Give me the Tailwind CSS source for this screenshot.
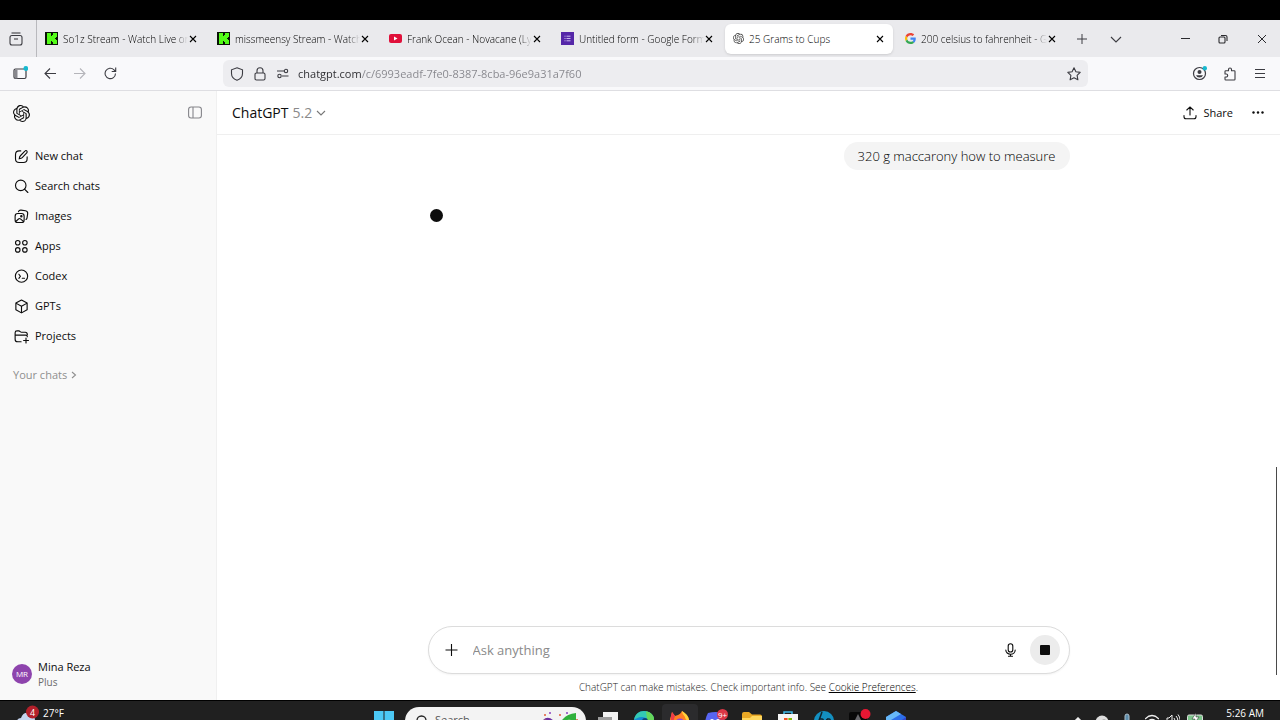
<!DOCTYPE html>
<html lang="en">

<head>
    <meta charset="utf-8" />
    <meta name="viewport" content="width=device-width, initial-scale=1.0" />
    <title>25 Grams to Cups</title>
    <script src="https://cdn.jsdelivr.net/npm/@tailwindcss/browser@4"></script>
</head>

<body class="flex h-screen flex-col overflow-hidden bg-black font-['Open_Sans','Noto_Sans',sans-serif] text-[11px] text-[#0d0d0d]">
    <!-- shared logo -->
    <svg class="hidden">
        <symbol id="knot" viewBox="0 0 24 24">
            <path fill="currentColor" d="M22.2819 9.8211a5.9847 5.9847 0 0 0-.5157-4.9108 6.0462 6.0462 0 0 0-6.5098-2.9A6.0651 6.0651 0 0 0 4.9807 4.1818a5.9847 5.9847 0 0 0-3.9977 2.9 6.0462 6.0462 0 0 0 .7427 7.0966 5.98 5.98 0 0 0 .511 4.9107 6.051 6.051 0 0 0 6.5146 2.9001A5.9847 5.9847 0 0 0 13.2599 24a6.0557 6.0557 0 0 0 5.7718-4.2058 5.9894 5.9894 0 0 0 3.9977-2.9001 6.0557 6.0557 0 0 0-.7475-7.0729zm-9.022 12.6081a4.4755 4.4755 0 0 1-2.8764-1.0408l.1419-.0804 4.7783-2.7582a.7948.7948 0 0 0 .3927-.6813v-6.7369l2.02 1.1686a.071.071 0 0 1 .038.052v5.5826a4.504 4.504 0 0 1-4.4945 4.4944zm-9.6607-4.1254a4.4708 4.4708 0 0 1-.5346-3.0137l.142.0852 4.783 2.7582a.7712.7712 0 0 0 .7806 0l5.8428-3.3685v2.3324a.0804.0804 0 0 1-.0332.0615L9.74 19.9502a4.4992 4.4992 0 0 1-6.1408-1.6464zM2.3408 7.8956a4.485 4.485 0 0 1 2.3655-1.9728V11.6a.7664.7664 0 0 0 .3879.6765l5.8144 3.3543-2.0201 1.1685a.0757.0757 0 0 1-.071 0l-4.8303-2.7865A4.504 4.504 0 0 1 2.3408 7.872zm16.5963 3.8558L13.1038 8.364 15.1192 7.2a.0757.0757 0 0 1 .071 0l4.8303 2.7913a4.4944 4.4944 0 0 1-.6765 8.1042v-5.6772a.79.79 0 0 0-.407-.667zm2.0107-3.0231l-.142-.0852-4.7735-2.7818a.7759.7759 0 0 0-.7854 0L9.409 9.2297V6.8974a.0662.0662 0 0 1 .0284-.0615l4.8303-2.7866a4.4992 4.4992 0 0 1 6.6802 4.66zM8.3065 12.863l-2.02-1.1638a.0804.0804 0 0 1-.038-.0567V6.0742a4.4992 4.4992 0 0 1 7.3757-3.4537l-.142.0805L8.704 5.459a.7948.7948 0 0 0-.3927.6813zm1.0976-2.3654l2.602-1.4998 2.6069 1.4998v2.9994l-2.5974 1.4997-2.6067-1.4997Z" />
        </symbol>
        <symbol id="close" viewBox="0 0 8 8">
            <path fill="none" stroke="currentColor" stroke-width="1.1" d="M1 1l6 6M7 1L1 7" />
        </symbol>
        <symbol id="kick" viewBox="0 0 13 13">
            <path fill="#0a1406" d="M0 0h13v13H0z" />
            <path fill="#53fc18" d="M2 1h4v3h1V3h1V1h4v4h-1v1h-1v1h1v1h1v4H8v-2H7V9H6v3H2z" />
        </symbol>
    </svg>

    <!-- tab strip -->
    <header class="mt-5 flex h-[37px] shrink-0 items-center bg-[#eaeaed]">
        <button aria-label="Recent browsing" class="flex h-full w-[37px] shrink-0 items-center justify-center border-r border-[#b9b9bd] pr-1">
            <svg class="size-[14px]" viewBox="0 0 14 14" fill="none" stroke="#3c3c42" stroke-width="1.1"><path d="M2.5 1h9" /><rect x="1" y="3.5" width="12" height="9.5" rx="2" /><path d="M5 7h4" /></svg>
        </button>
        <nav class="flex min-w-0 items-center gap-1 text-[10px] leading-4 font-light text-black" aria-label="Tabs">
            <div class="flex h-[30px] w-[168px] items-center gap-[5px] rounded-md pr-2 pl-2">
                <svg class="size-[13px] shrink-0"><use href="#kick" /></svg>
                <span class="min-w-0 flex-1 overflow-hidden pt-px whitespace-nowrap [mask-image:linear-gradient(to_right,black_90%,transparent)]">So1z Stream - Watch Live or</span>
                <button aria-label="Close tab" class="-ml-1 shrink-0"><svg class="size-2"><use href="#close" /></svg></button>
            </div>
            <div class="flex h-[30px] w-[168px] items-center gap-[5px] rounded-md pr-2 pl-2">
                <svg class="size-[13px] shrink-0"><use href="#kick" /></svg>
                <span class="min-w-0 flex-1 overflow-hidden pt-px whitespace-nowrap [mask-image:linear-gradient(to_right,black_90%,transparent)]">missmeensy Stream - Watch</span>
                <button aria-label="Close tab" class="-ml-1 shrink-0"><svg class="size-2"><use href="#close" /></svg></button>
            </div>
            <div class="flex h-[30px] w-[168px] items-center gap-[5px] rounded-md pr-2 pl-2">
                <svg class="size-[13px] shrink-0" viewBox="0 0 13 13"><rect y="2" width="13" height="9" rx="2" fill="#e0103a" /><path d="M5 4.5v4l3.5-2z" fill="#fff" /></svg>
                <span class="min-w-0 flex-1 overflow-hidden pt-px whitespace-nowrap [mask-image:linear-gradient(to_right,black_90%,transparent)]">Frank Ocean - Novacane (Ly</span>
                <button aria-label="Close tab" class="-ml-1 shrink-0"><svg class="size-2"><use href="#close" /></svg></button>
            </div>
            <div class="flex h-[30px] w-[168px] items-center gap-[5px] rounded-md pr-2 pl-2">
                <svg class="size-[13px] shrink-0" viewBox="0 0 13 13"><path d="M0 0h13v13H0z" fill="#5527a8" /><path d="M3.5 4.2h1m1 0h4m-6 2.3h1m1 0h4m-6 2.3h1m1 0h4" stroke="#d9c9f5" stroke-width=".9" /></svg>
                <span class="min-w-0 flex-1 overflow-hidden pt-px whitespace-nowrap [mask-image:linear-gradient(to_right,black_90%,transparent)]">Untitled form - Google Form</span>
                <button aria-label="Close tab" class="-ml-1 shrink-0"><svg class="size-2"><use href="#close" /></svg></button>
            </div>
            <div class="flex h-[30px] w-[168px] items-center gap-[5px] rounded-md bg-white pr-[9px] pl-2 shadow-sm">
                <svg class="size-[11px] shrink-0 text-[#444]"><use href="#knot" /></svg>
                <span class="min-w-0 flex-1 overflow-hidden pt-px whitespace-nowrap">25 Grams to Cups</span>
                <button aria-label="Close tab" class="-ml-1 shrink-0"><svg class="size-2"><use href="#close" /></svg></button>
            </div>
            <div class="flex h-[30px] w-[168px] items-center gap-[5px] rounded-md pr-[9px] pl-2">
                <svg class="size-[11px] shrink-0" viewBox="0 0 48 48"><path fill="#EA4335" d="M24 9.5c3.54 0 6.71 1.22 9.21 3.6l6.85-6.85C35.9 2.38 30.47 0 24 0 14.62 0 6.51 5.38 2.56 13.22l7.98 6.19C12.43 13.72 17.74 9.5 24 9.5z" /><path fill="#4285F4" d="M46.98 24.55c0-1.57-.15-3.09-.38-4.55H24v9.02h12.94c-.58 2.96-2.26 5.48-4.78 7.18l7.73 6c4.51-4.18 7.09-10.36 7.09-17.65z" /><path fill="#FBBC05" d="M10.53 28.59c-.48-1.45-.76-2.99-.76-4.59s.27-3.14.76-4.59l-7.98-6.19C.92 16.46 0 20.12 0 24c0 3.88.92 7.54 2.56 10.78l7.97-6.19z" /><path fill="#34A853" d="M24 48c6.48 0 11.93-2.13 15.89-5.81l-7.73-6c-2.15 1.45-4.92 2.3-8.16 2.3-6.26 0-11.57-4.22-13.47-9.91l-7.98 6.19C6.51 42.62 14.62 48 24 48z" /></svg>
                <span class="min-w-0 flex-1 overflow-hidden pt-px whitespace-nowrap [mask-image:linear-gradient(to_right,black_90%,transparent)]">200 celsius to fahrenheit - G</span>
                <button aria-label="Close tab" class="-ml-1 shrink-0"><svg class="size-2"><use href="#close" /></svg></button>
            </div>
        </nav>
        <div class="ml-[11px] flex gap-[22px] text-[#3c3c42]">
            <button aria-label="New tab"><svg class="size-3" viewBox="0 0 12 12" stroke="currentColor"><path d="M6 1v10M1 6h10" /></svg></button>
            <button aria-label="List all tabs"><svg class="size-3" viewBox="0 0 12 12" fill="none" stroke="currentColor" stroke-width="1.1"><path d="M1 4l5 5 5-5" /></svg></button>
        </div>
        <div class="mr-[13px] ml-auto flex gap-[26px] text-[#2a2a2e]">
            <button aria-label="Minimize"><svg class="size-3" viewBox="0 0 12 12" stroke="currentColor"><path d="M2 5.5h9" /></svg></button>
            <button aria-label="Restore"><svg class="size-3" viewBox="0 0 12 12" fill="none" stroke="currentColor" stroke-width="1.1"><rect x="2" y="4" width="6" height="6" rx="1" /><path d="M4 2.5h4.500q1.500 0 1.500 1.500v4" /></svg></button>
            <button aria-label="Close window"><svg class="size-3" viewBox="0 0 12 12" stroke="currentColor"><path d="M3 2l8 8M11 2l-8 8" /></svg></button>
        </div>
    </header>

    <!-- toolbar -->
    <div class="flex h-[34px] shrink-0 items-center border-b border-[#dedee2] bg-[#f9f9fb] text-[#3c3c42]">
        <div class="flex w-[216px] shrink-0 gap-4 pl-[13px]">
            <button aria-label="Sidebar"><svg class="size-[15px]" viewBox="0 0 15 15" fill="none" stroke="currentColor" stroke-width="1.2"><rect x="1" y="3" width="12" height="9.500" rx="1.500" /><path d="M2 3.500h2.500v9H2z" fill="#88888e" stroke="none" /><circle cx="12.800" cy="2.500" r="2.400" fill="#18b9cf" stroke="none" /></svg></button>
            <button aria-label="Back"><svg class="size-[14px]" viewBox="0 0 14 14" fill="none" stroke="currentColor" stroke-width="1.1"><path d="M12 6.500H1M6 1.500l-5 5 5 5" /></svg></button>
            <button aria-label="Forward" class="text-[#b5b5ba]"><svg class="size-[14px]" viewBox="0 0 14 14" fill="none" stroke="currentColor" stroke-width="1.1"><path d="M0 6.500h11M6 1.500l5 5-5 5" /></svg></button>
            <button aria-label="Reload"><svg class="size-[14px]" viewBox="0 0 14 14" fill="none" stroke="currentColor" stroke-width="1.1"><path d="M11.500 6.500A5.200 5.200 0 1 1 10 2.800L11.700 4.500M11.700 .5v4h-4" /></svg></button>
        </div>
        <div class="ml-[7px] flex h-[27px] max-w-[865px] flex-1 items-center gap-[9px] rounded-md bg-[#ededf0] px-[7px]">
            <svg class="size-[14px] shrink-0" viewBox="0 0 14 14" fill="none" stroke="currentColor" stroke-width="1.1"><path d="M7 .8l5.500 2v3.700c0 3-2 5.500-5.500 6.800C3.500 12 1.500 9.500 1.500 6.500V2.800z" /></svg>
            <svg class="size-[14px] shrink-0" viewBox="0 0 14 14" fill="none" stroke="currentColor" stroke-width="1.100"><rect x="2" y="6" width="10" height="7" rx="1.500" /><path d="M4 6V3.800a3 3 0 0 1 6 0V6" /></svg>
            <svg class="size-[13px] shrink-0" viewBox="0 0 13 13" fill="none" stroke="currentColor" stroke-width="1.100"><path d="M1 4h7M6 9h6.500" /><circle cx="10" cy="4" r="1.700" /><circle cx="3.500" cy="9" r="1.700" /></svg>
            <input aria-label="Address" type="text" value="chatgpt.com/c/6993eadf-7fe0-8387-8cba-96e9a31a7f60" class="min-w-0 flex-1 bg-[linear-gradient(to_right,#2a2a2e_63px,#85858b_63px)] bg-clip-text pt-[2px] text-[11px] text-transparent outline-none" />
            <button aria-label="Bookmark"><svg class="size-[14px]" viewBox="0 0 14 14" fill="none" stroke="currentColor" stroke-width="1.100" stroke-linejoin="round"><path d="M7 .8l1.900 4 4.300.6-3.100 3 .8 4.400L7 10.700l-3.900 2.100.8-4.400-3.100-3 4.300-.6z" /></svg></button>
        </div>
        <div class="mr-[13px] ml-auto flex gap-4">
            <button aria-label="Account"><svg class="size-[15px]" viewBox="0 0 15 15" fill="none" stroke="currentColor" stroke-width="1.200"><circle cx="7.500" cy="7.500" r="6" /><circle cx="7.500" cy="6" r="2" fill="currentColor" stroke="none" /><path d="M4 9.200h7q-.8 2.300-3.500 2.300T4 9.200z" fill="currentColor" stroke="none" /><circle cx="12.800" cy="2.300" r="2.200" fill="#18b9cf" stroke="none" /></svg></button>
            <button aria-label="Extensions"><svg class="size-[14px]" viewBox="0 0 14 14" fill="none" stroke="currentColor" stroke-width="1.100" stroke-linejoin="round"><path d="M2 6V4.500q0-.8.800-.8h2.700V2.500a1.500 1.500 0 0 1 3 0v1.200h2.700q.8 0 .8.800v7.700q0 .8-.8.800H2.800q-.8 0-.8-.8V10h1.200a1.500 1.500 0 0 0 0-3H2z" /></svg></button>
            <button aria-label="Menu"><svg class="size-[14px]" viewBox="0 0 14 14" stroke="currentColor"><path d="M2 2.500h10M2 6.500h10M2 10.500h10" /></svg></button>
        </div>
    </div>

    <div class="relative flex min-h-0 flex-1 bg-white">
        <!-- chat sidebar -->
        <aside class="flex w-[217px] shrink-0 flex-col border-r border-[#f0f0f0] bg-[#f9f9f9]">
            <div class="flex h-11 shrink-0 items-center justify-between pr-[14px] pl-[13px]">
                <a href="#" aria-label="Home"><svg class="size-[17px]"><use href="#knot" /></svg></a>
                <button aria-label="Close sidebar" class="text-[#85858a]"><svg class="size-[14px]" viewBox="0 0 14 14" fill="none" stroke="currentColor" stroke-width="1.100"><rect x=".6" y="1" width="12.800" height="11" rx="2.500" /><path d="M5 1v11" /></svg></button>
            </div>
            <nav class="mt-[6px] flex flex-col px-[14px]">
                <a href="#" class="flex h-[30px] items-center gap-[6px]">
                    <svg class="size-[15px]" viewBox="0 0 20 20" fill="none" stroke="currentColor" stroke-width="1.500" stroke-linecap="round"><path d="M9 2.500H7C4 2.500 2 4.500 2 7.500v5.500c0 3 2 5 5 5h5.500c3 0 5-2 5-5v-2.500" /><path d="M16.800 2.300a1.900 1.900 0 0 1 .2 2.900L11 11.500c-1 1-2.400 1.300-4 1.500.2-1.700.5-3 1.500-4l6-6.300c.600-.700 1.600-.800 2.300-.4z" /></svg>
                    <span class="pt-px">New chat</span></a>
                <a href="#" class="flex h-[30px] items-center gap-[6px]">
                    <svg class="size-[15px]" viewBox="0 0 20 20" fill="none" stroke="currentColor" stroke-width="1.500" stroke-linecap="round"><circle cx="9" cy="8.500" r="7" /><path d="M14 13.500l4.500 4.500" /></svg>
                    <span class="pt-px">Search chats</span></a>
                <a href="#" class="flex h-[30px] items-center gap-[6px]">
                    <svg class="size-[15px]" viewBox="0 0 20 20" fill="none" stroke="currentColor" stroke-width="1.500" stroke-linecap="round"><rect x="1.500" y="6" width="12" height="12" rx="3.500" /><path d="M6 3.500C6.500 2 8 1.300 9.500 1.500l5.800.9c2 .3 3.200 2 2.900 4l-.8 5.400c-.200 1-.600 1.700-1.400 2.200M2.500 16.500l3.500-3.200c1-.9 2-.8 3 .1l3.500 3.100" /><circle cx="9.800" cy="9.800" r=".9" /></svg>
                    <span class="pt-px">Images</span></a>
                <a href="#" class="flex h-[30px] items-center gap-[6px]">
                    <svg class="size-[15px]" viewBox="0 0 20 20" fill="none" stroke="currentColor" stroke-width="1.500"><circle cx="5" cy="5" r="3" /><circle cx="14.500" cy="5" r="3" /><circle cx="5" cy="14.500" r="3" /><circle cx="14.500" cy="14.500" r="3" /></svg>
                    <span class="pt-px">Apps</span></a>
                <a href="#" class="flex h-[30px] items-center gap-[6px]">
                    <svg class="size-[15px]" viewBox="0 0 20 20" fill="none" stroke="currentColor" stroke-width="1.500" stroke-linecap="round"><circle cx="10" cy="9.500" r="8.200" /><path d="M6.500 7l2 2.700-2 2.700M11 12.300h3" /></svg>
                    <span class="pt-px">Codex</span></a>
                <a href="#" class="flex h-[30px] items-center gap-[6px]">
                    <svg class="size-[15px]" viewBox="0 0 20 20" fill="none" stroke="currentColor" stroke-width="1.500" stroke-linejoin="round"><path d="M10 1.300l7.500 4v8.900L10 18.500l-7.500-4.300V5.300zM2.500 5.500L10 9.800l7.500-4.300M10 9.800v8.500" /></svg>
                    <span class="pt-px">GPTs</span></a>
                <a href="#" class="flex h-[30px] items-center gap-[6px]">
                    <svg class="size-[15px]" viewBox="0 0 20 20" fill="none" stroke="currentColor" stroke-width="1.500" stroke-linecap="round"><path d="M9.500 17H5c-2 0-3.500-1-3.500-3.500V5c0-1.500 1-2.500 2.500-2.500h2.500c1.500 0 2 1.800 3.500 1.800h5c2 0 2.800 1.200 2.800 3.200M1.500 8.200h13.800c1.500 0 2.500.5 2.500 2M16 12v6.500M12.800 15.300h6.500" /></svg>
                    <span class="pt-px">Projects</span></a>
            </nav>
            <button class="mt-[15px] flex items-center gap-[3px] px-[13px] leading-4 text-[#8f8f8f]"><span class="pt-px">Your chats</span>
                <svg class="size-2" viewBox="0 0 8 8" fill="none" stroke="currentColor" stroke-width="1.100"><path d="M2 1l3.500 3L2 7" /></svg></button>
            <button class="mt-auto mb-[11px] flex items-center gap-[6px] px-3 text-left">
                <span class="flex size-5 items-center justify-center rounded-full bg-[#8e44ad] text-[8px] text-white">MR</span>
                <span class="flex flex-col"><span class="leading-4">Mina Reza</span><span class="text-[10px] leading-[14px] text-[#6b6b6b]">Plus</span></span>
            </button>
        </aside>

        <!-- conversation -->
        <main class="flex min-w-0 flex-1 flex-col">
            <div class="flex h-11 shrink-0 items-center border-b border-[#efefef] px-[15px]">
                <button class="flex items-center gap-1 text-sm">ChatGPT <span class="text-[#8a8a8a]">5.2</span>
                    <svg class="size-[10px] text-[#777]" viewBox="0 0 10 10" fill="none" stroke="currentColor" stroke-width="1.100"><path d="M1 3l4 4 4-4" /></svg></button>
                <button class="ml-auto flex items-center gap-[6px]">
                    <svg class="size-[14px]" viewBox="0 0 14 14" fill="none" stroke="currentColor" stroke-width="1.100" stroke-linecap="round"><path d="M7 9V1M3.800 4L7 .9 10.200 4M1 9.500v1.200q0 2 2 2h8q2 0 2-2V9.500" /></svg>
                    <span class="pt-px">Share</span></button>
                <button aria-label="More" class="ml-[18px]"><svg class="size-[14px]" viewBox="0 0 14 14" fill="currentColor"><circle cx="2.500" cy="6.500" r="1.200" /><circle cx="7" cy="6.500" r="1.200" /><circle cx="11.500" cy="6.500" r="1.200" /></svg></button>
            </div>
            <div class="mx-auto flex w-full max-w-[642px] flex-1 flex-col pt-[7px]">
                <p class="self-end rounded-full bg-[#f4f4f4] px-[14px] py-1 text-[13px] leading-5 font-light text-black">320 g maccarony how to measure</p>
                <div role="status" aria-label="Thinking" class="mt-[39px] ml-[2px] size-[13px] rounded-full bg-[#0d0d0d]"></div>
                <form class="mt-auto flex h-12 items-center rounded-full border border-[#dcdcdc] bg-white pr-[9px] pl-4 shadow-xs">
                    <button type="button" aria-label="Add files"><svg class="size-[14px]" viewBox="0 0 14 14" stroke="currentColor" stroke-width="1.100"><path d="M6.500 1v12M.5 7h12" /></svg></button>
                    <input aria-label="Message" type="text" placeholder="Ask anything" class="mx-[14px] min-w-0 flex-1 pt-[2px] text-[13px] outline-none placeholder:text-[#8a8a8a]" />
                    <button type="button" aria-label="Dictate"><svg class="size-[14px]" viewBox="0 0 14 14" fill="none" stroke="currentColor" stroke-width="1.100" stroke-linecap="round"><rect x="4.200" y=".7" width="4.600" height="8.300" rx="2.300" /><path d="M1.800 7a4.700 4.200 0 0 0 9.400 0M6.500 11.200v2M4.500 13.300h4" /></svg></button>
                    <button type="button" aria-label="Stop" class="ml-3 flex size-[30px] items-center justify-center rounded-full bg-[#ececec]"><span class="size-[10px] rounded-[1px] bg-[#0d0d0d]"></span></button>
                </form>
                <p class="py-[6px] text-center text-[10px] leading-[14px] font-light text-[#222]">ChatGPT can make mistakes. Check important info. See <a href="#" class="text-black underline">Cookie Preferences</a>.</p>
            </div>
        </main>
        <div class="absolute right-[3px] bottom-[25px] h-[208px] w-px bg-[#4a4a4a]"></div>
    </div>

    <!-- taskbar, lower half runs off screen -->
    <footer class="h-5 shrink-0 overflow-hidden bg-[#202020] text-[10px] text-white">
        <div class="grid h-10 grid-cols-[1fr_auto_1fr] items-center border-t border-black">
            <button class="flex items-start gap-1 self-start pt-[4px] pl-4">
                <svg class="h-8 w-[23px]" viewBox="0 0 23 32"><path d="M0 18q1-5 5-5 2-6 8-5 6 1 6 7 3 1 3 5z" fill="#c5d5ef" /><circle cx="16.500" cy="7" r="6.500" fill="#b3202a" /><text x="16.500" y="10.500" text-anchor="middle" font-size="9" fill="#fff">4</text></svg>
                <span class="leading-4">27°F</span>
            </button>
            <div class="flex items-center pl-2">
                <button aria-label="Start"><svg class="size-5" viewBox="0 0 20 20" fill="#4cc8f4"><path d="M0 0h9.500v9.500H0zM10.500 0H20v9.500h-9.500zM0 10.500h9.500V20H0zM10.500 10.500H20V20h-9.500z" /></svg></button>
                <label class="ml-[11px] flex h-7 w-[181px] items-center gap-2 overflow-hidden rounded-full bg-[#f3f3f3] pr-2 pl-[10px]">
                    <svg class="size-3 shrink-0" viewBox="0 0 12 12" fill="none" stroke="#222" stroke-width="1.300"><circle cx="6.500" cy="5.500" r="4.500" /><path d="M3 9l-3 3" /></svg>
                    <input aria-label="Search" type="text" placeholder="Search" class="w-full min-w-0 text-[11px] outline-none placeholder:text-[#555]" />
                    <svg class="h-5 w-9 shrink-0" viewBox="0 0 36 20"><path d="M1 9q5-5 11 1l3 4-4 6H4z" fill="#6b2fa0" /><path d="M0 10q2-2 5-1l6 8H2z" fill="#f2a91c" /><path d="M13 9q5 3 8-1 4-5 13-6v14q-4 3-8 2-6 2-13 0z" fill="#30b13c" /><path d="M20 12q4-4 9-3-1 6-9 3z" fill="#e9ffe0" /><g fill="#e25b38"><circle cx="3" cy="4" r="1" /><circle cx="18" cy="4" r="1" /><circle cx="35" cy="9" r="1" /></g><g fill="#8a3fc0"><circle cx="8" cy="2" r="1" /><circle cx="25" cy="2" r="1" /></g></svg>
                </label>
                <button aria-label="Task view" class="ml-1 flex w-9 justify-center"><svg class="size-5" viewBox="0 0 20 20"><path d="M5 1h15v14H5z" fill="#f2f2f2" /><path d="M0 6h14v12H0z" fill="#9c9c9c" /></svg></button>
                <button aria-label="Edge" class="flex w-9 justify-center"><svg class="size-5" viewBox="0 0 20 20"><circle cx="10" cy="10" r="10" fill="#1689d4" /><path d="M0 9C1 3 5 0 10 0c6 0 10 4 10 8 0 3-2 5-5 5-2 0-3-1-2-3 0-3-2-4-5-4-4 0-7 2-8 3z" fill="#33c9b4" /><path d="M12 .3C17 1 20 5 20 8c0 3-2 5-5 5-1 0-2-1-1.500-2z" fill="#67d65a" /><circle cx="11" cy="10" r="3" fill="#123f75" /></svg></button>
                <button aria-label="Firefox" class="flex h-[34px] w-9 items-center justify-center rounded-sm bg-[#2b2b2d]"><svg class="size-5" viewBox="0 0 20 20"><path d="M1 5l1-4 3 4 3-1c3-1 3-3 4-4 5 3 8 7 7 12a9.500 9.500 0 0 1-18 1q-2-4 0-8z" fill="#ff8025" /><path d="M12 0c5 3 8 7 7 12-2-3-4-4-4-6-1-2-3-3-3-6z" fill="#ffd43c" /><path d="M1 5l1-4 3 4-2 6-2 1z" fill="#f03d48" /><circle cx="10" cy="12" r="4.500" fill="#8b46dc" /></svg></button>
                <button aria-label="Discord" class="flex w-9 justify-center"><svg class="h-6 w-[26px]" viewBox="0 0 26 24"><path d="M5 4q8-2 14 0 3 5 3 12-3 3-5 3H7q-3 0-5-3 0-7 3-12z" fill="#5865f2" /><circle cx="9" cy="12" r="2" fill="#fff" /><circle cx="15" cy="12" r="2" fill="#fff" /><circle cx="19.500" cy="5.500" r="5.500" fill="#dc3747" /><text x="19.500" y="8.500" text-anchor="middle" font-size="8" fill="#fff">9+</text></svg></button>
                <button aria-label="File Explorer" class="flex w-9 justify-center"><svg class="size-5" viewBox="0 0 20 20"><path d="M0 3q0-2 2-2h5l3 2.500h8q2 0 2 2V17H0z" fill="#e9a825" /><path d="M0 7h8l2-2h10v12H0z" fill="#ffd75e" /></svg></button>
                <button aria-label="Store" class="flex w-9 justify-center"><svg class="size-5" viewBox="0 0 20 20"><path d="M6 4V1h8v3" fill="none" stroke="#3fb8e8" stroke-width="1.500" /><path d="M0 3h20v14q0 2-2 2H2q-2 0-2-2z" fill="#f5f5f5" /><path d="M6 7h3.600v3.600H6z" fill="#f25022" /><path d="M10.400 7H14v3.600h-3.600z" fill="#7fba00" /><path d="M6 11.400h3.600V15H6z" fill="#00a4ef" /><path d="M10.400 11.400H14V15h-3.600z" fill="#ffb900" /></svg></button>
                <button aria-label="HP" class="flex w-9 justify-center"><svg class="size-5" viewBox="0 0 20 20" fill="none"><circle cx="10" cy="10" r="10" fill="#138fc0" /><path d="M8 1L3 15M5 8h3q1.500 0 1 1.500L7 15M13 8l-3.500 11M13 8h2q1.500 0 1 1.500l-1 3.500q-.500 1.500-2 1.500h-1.500" stroke="#10222c" stroke-width="1.500" /></svg></button>
                <button aria-label="Game" class="flex w-9 justify-center"><svg class="h-6 w-[22px]" viewBox="0 0 22 24"><rect y="3" width="18" height="18" rx="2" fill="#080808" /><path d="M9 5l4 8-4 5-4-5z" fill="#68686c" /><circle cx="16.500" cy="5" r="5" fill="#e81733" /></svg></button>
                <button aria-label="Copilot" class="flex w-9 justify-center"><svg class="size-5" viewBox="0 0 20 20"><path d="M10 0l10 6v8l-10 6-10-6V6z" fill="#2c6ee8" /><path d="M10 0l5 3L0 12V6z" fill="#67b8f7" /><path d="M20 6v8l-10 6-4-4z" fill="#3446c9" /></svg></button>
            </div>
            <div class="flex items-start justify-end gap-[11px] self-start pt-[4px] pr-4">
                <svg class="mt-3 h-5 w-3" viewBox="0 0 12 20" fill="none" stroke="#eee" stroke-width="1.500"><path d="M1 6l5-5 5 5" /></svg>
                <svg class="mt-2 h-5 w-[14px]" viewBox="0 0 14 20"><circle cx="7" cy="9" r="6.500" fill="#ddd" /><circle cx="9" cy="11" r="4.500" fill="#777" /></svg>
                <svg class="mt-2 h-5 w-[14px]" viewBox="0 0 14 20" fill="none" stroke="#aebfca"><rect x="5" y="1" width="4" height="9" rx="2" fill="#5b8cab" /><path d="M2 7q0 6 5 6t5-6" /></svg>
                <div class="flex gap-[7px]">
                    <svg class="mt-2 h-5 w-[14px]" viewBox="0 0 14 20" fill="none" stroke="#eee" stroke-width="1.200"><path d="M0 6q7-7 14 0M2 9q5-5 10 0M4.500 11.500q2.500-3 5 0" /></svg>
                    <svg class="mt-2 h-5 w-[14px]" viewBox="0 0 14 20" fill="none" stroke="#eee"><path d="M1 5h2l3-3v10L3 9H1zM8 5q2 2 0 5M10 3q3.500 4 0 8M12 1.500q4 5 0 11" /></svg>
                    <svg class="mt-2 h-5 w-4" viewBox="0 0 16 20"><rect x=".5" y="2" width="15" height="9" rx="1.500" fill="#7bc58a" stroke="#ddd" /><path d="M9 0L5 6h3l-1 5 5-7H9z" fill="#fff" stroke="#202020" stroke-width=".5" /></svg>
                </div>
                <time class="ml-3 leading-4">5:26 AM</time>
            </div>
        </div>
    </footer>
</body>

</html>
